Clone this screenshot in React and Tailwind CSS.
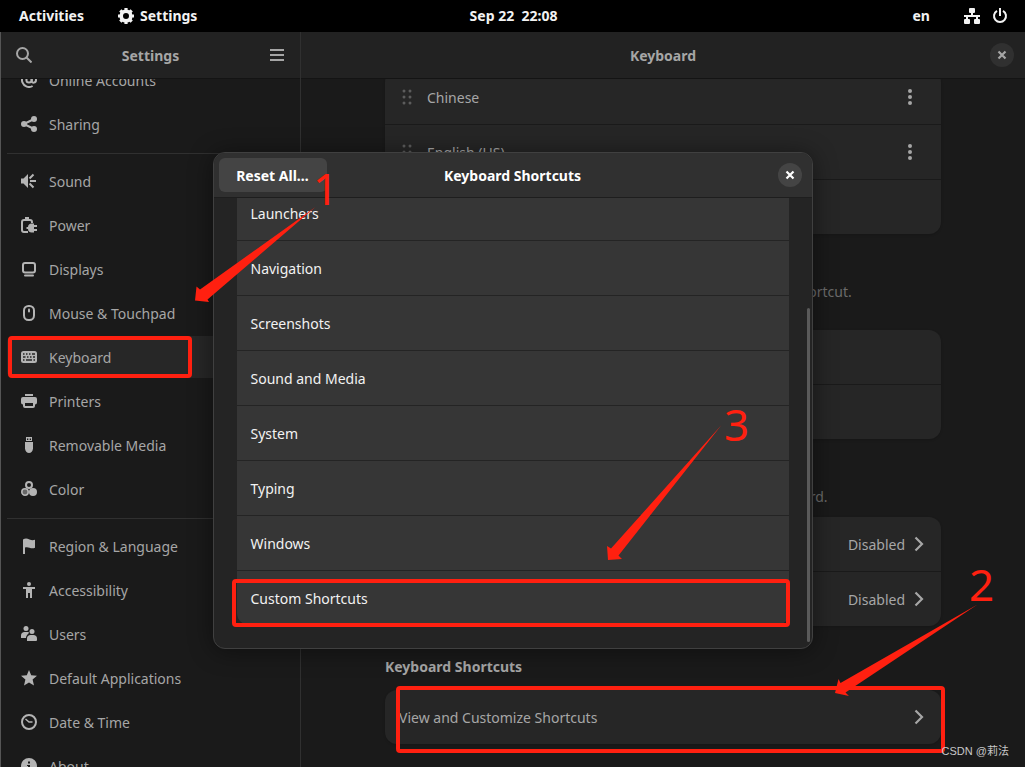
const Icon = ({ children, className = 'size-4' }) => (
  <svg viewBox="0 0 16 16" className={className} fill="currentColor" aria-hidden="true">
    {children}
  </svg>
);

const icons = {
  online: (
    <g fill="none" stroke="currentColor" strokeWidth="2">
      <circle cx="8" cy="8" r="2.6" />
      <path d="M10.8 5v4.200c0 2.200 4.200 2 4.200-1.200a7 7 0 1 0-3.400 6" />
    </g>
  ),
  sharing: (
    <>
      <path d="M3 8l10-5M3 8l10 5" stroke="currentColor" strokeWidth="2" />
      <circle cx="3" cy="8" r="3" />
      <circle cx="13" cy="3" r="3" />
      <circle cx="13" cy="13" r="3" />
    </>
  ),
  sound: (
    <>
      <path d="M0 5.500h2.500L7 1v14l-4.500-4.500H0z" />
      <path d="M8.500 5.500L12.500 1.500M9 8h6M8.500 10.500l4 4" fill="none" stroke="currentColor" strokeWidth="2" />
    </>
  ),
  power: (
    <>
      <path d="M7 15H3a2 2 0 0 1-2-2V5a2 2 0 0 1 2-2h6a2 2 0 0 1 2 2v1" fill="none" stroke="currentColor" strokeWidth="2" />
      <path d="M4 0h4v3H4z" />
      <path d="M7 10c0-2 1.500-3.500 3.500-3.500H13V8h3v2h-3v2h3v2h-3v1.500h-2.500C8.500 15.500 7 14 7 12H5.500v-2z" />
    </>
  ),
  displays: (
    <>
      <rect x="2" y="2" width="12" height="9.500" rx="2" fill="none" stroke="currentColor" strokeWidth="2" />
      <path d="M4 13.500h8a1 1 0 0 1 0 2H4a1 1 0 0 1 0-2z" />
    </>
  ),
  mouse: (
    <>
      <rect x="3" y="1" width="10" height="14" rx="4.500" fill="none" stroke="currentColor" strokeWidth="2" />
      <rect x="7" y="3.500" width="2" height="4" rx="1" />
    </>
  ),
  keyboard: (
    <>
      <rect y="2" width="16" height="12" rx="2.500" />
      <path
        d="M2 5h1.500M5 5h1.500M8 5h1.500M11 5h3M2 8h2.500M6 8h1.500M9 8h1.500M12 8h2M2 11h1.500M5 11h6M12.500 11H14"
        stroke="#262626"
        strokeWidth="1.500"
      />
    </>
  ),
  printers: (
    <>
      <path d="M4 1h8v2H4z" />
      <path d="M2 4h12a2 2 0 0 1 2 2v3.500a2 2 0 0 1-2 2V13a2 2 0 0 1-2 2H4a2 2 0 0 1-2-2v-1.500a2 2 0 0 1-2-2V6a2 2 0 0 1 2-2zm2 6v3h8v-3z" fillRule="evenodd" />
    </>
  ),
  removable: (
    <>
      <path d="M5 0h6v4H5zM6 1.500V3h1.300V1.500zM8.700 1.500V3H10V1.500z" fillRule="evenodd" />
      <path d="M4 5h8v6.500c0 2.500-2 4.500-4 4.500s-4-2-4-4.500z" />
    </>
  ),
  color: (
    <>
      <circle cx="8" cy="4" r="3" fill="none" stroke="currentColor" strokeWidth="2" />
      <circle cx="12" cy="11" r="4" />
      <circle cx="4" cy="11" r="3.200" fill="#666" stroke="currentColor" strokeWidth="1.600" />
    </>
  ),
  region: <path d="M2 1.500C4 0 6 0 8.500 1.500c2 1 4 .8 5.500.3v8c-2 .8-3.500.7-5.500-.1C6.800 9 5.500 9 4 9.500V16H2z" />,
  accessibility: (
    <>
      <circle cx="8" cy="2" r="2" />
      <path d="M2 5h12v2h-3v9H9v-5H7v5H5V7H2z" />
    </>
  ),
  users: (
    <>
      <circle cx="5" cy="2.500" r="2.500" />
      <path d="M0 12V9.500C0 7.500 1.500 6 3.500 6h3C7.500 6 8 6.500 8 7c-1.500 1-3 3-3 5z" />
      <circle cx="11" cy="5.500" r="2.500" />
      <path d="M6 15v-2.500C6 10.500 7.500 9 9.500 9h3c2 0 3.500 1.500 3.500 3.500V14a1 1 0 0 1-1 1z" />
    </>
  ),
  apps: <path d="M8 0l2.200 5.200L16 5.800l-4.400 3.800L13 15.500 8 12.400 3 15.500l1.400-5.900L0 5.800l5.800-.6z" />,
  date: (
    <g fill="none" stroke="currentColor">
      <circle cx="8" cy="8" r="7" strokeWidth="2" />
      <path d="M4.500 5l3.500 3h3.500" strokeWidth="1.500" />
    </g>
  ),
  about: <path d="M8 0a8 8 0 1 0 0 16A8 8 0 0 0 8 0zm-1 3.500h2v2H7zM6 7h3v5h1.500v1H6v-1h1V8H6z" fillRule="evenodd" />,
};

const sidebarGroups = [
  [
    { label: 'Online Accounts', icon: 'online' },
    { label: 'Sharing', icon: 'sharing' },
  ],
  [
    { label: 'Sound', icon: 'sound' },
    { label: 'Power', icon: 'power' },
    { label: 'Displays', icon: 'displays' },
    { label: 'Mouse & Touchpad', icon: 'mouse' },
    { label: 'Keyboard', icon: 'keyboard', active: true },
    { label: 'Printers', icon: 'printers' },
    { label: 'Removable Media', icon: 'removable' },
    { label: 'Color', icon: 'color' },
  ],
  [
    { label: 'Region & Language', icon: 'region' },
    { label: 'Accessibility', icon: 'accessibility' },
    { label: 'Users', icon: 'users' },
    { label: 'Default Applications', icon: 'apps' },
    { label: 'Date & Time', icon: 'date' },
    { label: 'About', icon: 'about' },
  ],
];

const shortcutGroups = [
  'Launchers',
  'Navigation',
  'Screenshots',
  'Sound and Media',
  'System',
  'Typing',
  'Windows',
  'Custom Shortcuts',
];

const CloseIcon = () => (
  <Icon>
    <path d="M4.500 4.500l7 7M11.500 4.500l-7 7" stroke="currentColor" strokeWidth="2.200" />
  </Icon>
);

const Chevron = () => (
  <Icon>
    <path d="M4.500 1.500L11 8l-6.500 6.500" fill="none" stroke="currentColor" strokeWidth="2.200" />
  </Icon>
);

const TopBar = () => (
  <header className="grid h-8 shrink-0 grid-cols-3 items-center bg-black pr-[17px] pl-[19px] font-bold text-[#f2f2f2]">
    <div className="flex items-center gap-[34px]">
      <button>Activities</button>
      <button className="flex items-center gap-1.5">
        <Icon>
          <circle cx="8" cy="8" r="4.800" fill="none" stroke="currentColor" strokeWidth="3.600" />
          <path
            d="M8 0v3M8 13v3M0 8h3M13 8h3M2.300 2.300l2.200 2.200M11.500 11.500l2.200 2.200M2.300 13.700l2.200-2.200M11.500 4.500l2.200-2.200"
            stroke="currentColor"
            strokeWidth="3.200"
          />
        </Icon>
        Settings
      </button>
    </div>
    <button className="justify-self-center whitespace-pre">Sep 22  22:08</button>
    <div className="flex items-center justify-end">
      <button className="mr-[34px]">en</button>
      <button className="flex items-center gap-3" aria-label="System menu">
        <Icon>
          <path d="M6 0h4a1 1 0 0 1 1 1v3a1 1 0 0 1-1 1H9v2h7v2h-2v2h1a1 1 0 0 1 1 1v3a1 1 0 0 1-1 1h-4a1 1 0 0 1-1-1v-3a1 1 0 0 1 1-1h1V9H4v2h1a1 1 0 0 1 1 1v3a1 1 0 0 1-1 1H1a1 1 0 0 1-1-1v-3a1 1 0 0 1 1-1h1V9H0V7h7V5H6a1 1 0 0 1-1-1V1a1 1 0 0 1 1-1z" />
        </Icon>
        <Icon>
          <path d="M5 2.800a6 6 0 1 0 6 0" fill="none" stroke="currentColor" strokeWidth="2" />
          <path d="M7 0h2v8H7z" />
        </Icon>
      </button>
    </div>
  </header>
);

const Sidebar = () => (
  <aside className="flex w-[301px] shrink-0 flex-col border-r border-l border-r-[#303030] border-l-[#555]">
    <div className="flex h-[47px] shrink-0 items-center justify-between border-b border-[#141414] bg-[#222] px-[15px]">
      <button aria-label="Search">
        <Icon>
          <circle cx="6.500" cy="6.500" r="5.500" fill="none" stroke="currentColor" strokeWidth="2" />
          <path d="M10.500 10.500l5 5" stroke="currentColor" strokeWidth="2" />
        </Icon>
      </button>
      <h1 className="pt-0.5 font-bold">Settings</h1>
      <button aria-label="Menu">
        <Icon>
          <path d="M1 2h14v2H1zM1 7h14v2H1zM1 12h14v2H1z" />
        </Icon>
      </button>
    </div>
    <nav className="min-h-0 flex-1 overflow-hidden pr-2 pl-1.5">
      <div className="-mt-5">
        {sidebarGroups.map((group, index) => (
          <ul key={index}>
            {index > 0 && <li className="my-1.5 h-px bg-[#303030]" />}
            {group.map((item) => (
              <li key={item.label} className="h-11 pb-0.5">
                <a
                  href="#"
                  className={`flex h-full items-center gap-3 rounded-md px-3.5 ${item.active ? 'bg-[#272727]' : ''}`}
                >
                  <Icon className="size-4 text-[#b4b4b4]">{icons[item.icon]}</Icon>
                  <span className="pt-0.5">{item.label}</span>
                </a>
              </li>
            ))}
          </ul>
        ))}
      </div>
    </nav>
  </aside>
);

const Group = ({ children }) => (
  <div className="divide-y divide-[#1a1a1a] rounded-xl bg-[#262626] shadow-sm">{children}</div>
);

const Row = ({ children }) => (
  <div>
    <div className="flex h-[54px] items-center px-3.5">{children}</div>
  </div>
);

const SourceRow = ({ label }) => (
  <Row>
    <Icon className="mr-3 size-4 text-[#5c5c5c]">
      {[2, 8, 14].map((y) => (
        <g key={y}>
          <circle cx="5" cy={y} r="1.500" />
          <circle cx="11" cy={y} r="1.500" />
        </g>
      ))}
    </Icon>
    <span className="flex-1 pt-0.5">{label}</span>
    <button className="mr-[9px]" aria-label={`${label} options`}>
      <Icon>
        <circle cx="8" cy="2" r="2" />
        <circle cx="8" cy="8" r="2" />
        <circle cx="8" cy="14" r="2" />
      </Icon>
    </button>
  </Row>
);

const LinkRow = ({ label, value }) => (
  <div>
    <button className="flex h-[54px] w-full items-center justify-between px-3.5">
      <span className="pt-0.5">{label}</span>
      <span className="flex items-center gap-1.5">
        <span className="pt-0.5">{value}</span>
        <Chevron />
      </span>
    </button>
  </div>
);

const RadioRow = ({ label, checked }) => (
  <div>
    <label className="flex h-[54px] items-center gap-3 px-3.5">
      <input type="radio" name="source-mode" defaultChecked={checked} className="accent-[#3584e4]" />
      {label}
    </label>
  </div>
);

const KeyboardPanel = () => (
  <main className="flex min-w-0 flex-1 flex-col">
    <div className="flex h-[47px] shrink-0 items-center border-b border-[#141414] bg-[#222] px-[11px]">
      <h2 className="flex-1 pt-0.5 pl-6 text-center font-bold">Keyboard</h2>
      <button className="flex size-6 items-center justify-center rounded-full bg-[#303030]" aria-label="Close">
        <CloseIcon />
      </button>
    </div>
    <div className="min-h-0 flex-1 overflow-hidden">
      <div className="mx-auto -mt-[9px] max-w-[556px]">
        <Group>
          <SourceRow label="Chinese" />
          <SourceRow label="English (US)" />
          <Row />
        </Group>

        <h3 className="pt-[33px] leading-4 font-bold">Input Source Switching</h3>
        <p className="pb-[11px] leading-[18px] text-[#6b6b6b]">
          Input sources can be switched using a Super+Space keyboard shortcut.
          <br />
          This can be changed in the keyboard shortcut settings.
        </p>
        <Group>
          <RadioRow label="Use the same source for all windows" checked />
          <RadioRow label="Switch input sources individually for each window" />
        </Group>

        <h3 className="pt-[33px] leading-4 font-bold">Special Character Entry</h3>
        <p className="pb-[11px] leading-[18px] text-[#6b6b6b]">
          Methods for entering symbols and letter variants using a keyboard.
        </p>
        <Group>
          <LinkRow label="Alternate Characters Key" value="Disabled" />
          <LinkRow label="Compose Key" value="Disabled" />
        </Group>

        <h3 className="pt-[33px] pb-[15px] leading-4 font-bold">Keyboard Shortcuts</h3>
        <Group>
          <LinkRow label="View and Customize Shortcuts" />
        </Group>
      </div>
    </div>
  </main>
);

const ShortcutsDialog = () => (
  <div className="absolute inset-0 flex items-center justify-center pt-0.5">
    <section
      role="dialog"
      aria-label="Keyboard Shortcuts"
      className="relative flex h-[497px] w-[600px] flex-col overflow-hidden rounded-xl border border-[#404040] bg-[#242424] text-[#f2f2f2] shadow-[0_2px_24px_rgba(0,0,0,0.45)]"
    >
      <div className="grid shrink-0 grid-cols-[1fr_auto_1fr] items-center border-b border-[#1e1e1e] bg-[#303030] px-[5px] py-[5px] font-bold text-white">
        <button className="h-[34px] w-[108px] rounded-md bg-[#444] pt-0.5">Reset All…</button>
        <h2 className="pt-0.5">Keyboard Shortcuts</h2>
        <button
          className="mr-[5px] flex size-6 items-center justify-center justify-self-end rounded-full bg-[#444]"
          aria-label="Close dialog"
        >
          <CloseIcon />
        </button>
      </div>
      <div className="min-h-0 flex-1 overflow-hidden px-[23px]">
        <ul className="-mt-3 divide-y divide-[#242424] rounded-xl bg-[#363636]">
          {shortcutGroups.map((name) => (
            <li key={name}>
              <button className="block h-[54px] w-full px-3.5 pt-0.5 text-left">{name}</button>
            </li>
          ))}
        </ul>
      </div>
      <div className="absolute right-0.5 bottom-1.5 h-[334px] w-[3px] rounded-full bg-[#5a5a5a]" />
    </section>
  </div>
);

// Red tutorial marks drawn over the whole desktop
const Annotations = () => (
  <div className="pointer-events-none absolute inset-0 text-[#ff2010]">
    <div className="absolute top-[336px] left-2 h-[42px] w-[184px] rounded-sm border-4 border-current" />
    <div className="absolute top-[579px] left-[232px] h-12 w-[558px] rounded-sm border-4 border-current" />
    <div className="absolute top-[686px] left-[396px] h-[67px] w-[549px] rounded-sm border-4 border-current" />
    <svg viewBox="0 0 1025 767" className="absolute top-0 left-0 h-[767px] w-[1025px]" fill="currentColor">
      <path d="M315.500 207L207.500 299.500L209 302L195 300.500L196.500 286.500L200 289.500z" />
      <path d="M721.500 425L618.500 555.500L622 559L608 560L607 546L611 548.500z" />
      <path d="M977.500 604.500L845.500 692.500L849 696L835 693L838.500 679L840.500 683z" />
    </svg>
    <span className="absolute top-[158px] left-[313px] text-[44px] leading-[60px]">1</span>
    <span className="absolute top-[394px] left-[724px] text-[44px] leading-[60px]">3</span>
    <span className="absolute top-[554px] left-[969px] text-[44px] leading-[60px]">2</span>
  </div>
);

const App = () => {
  return (
    <div className="relative flex h-screen flex-col overflow-hidden bg-[#1a1a1a] font-['Noto_Sans',sans-serif] text-sm text-[#a6a6a6]">
      <TopBar />
      <div className="relative flex min-h-0 flex-1">
        <Sidebar />
        <KeyboardPanel />
        <ShortcutsDialog />
      </div>
      <Annotations />
      <span className="absolute right-4 bottom-2 font-['Liberation_Sans','Noto_Sans_CJK_SC',sans-serif] text-[11px] leading-4 text-[#c8c8c8]">
        CSDN @莉法
      </span>
    </div>
  );
};

export default App;
